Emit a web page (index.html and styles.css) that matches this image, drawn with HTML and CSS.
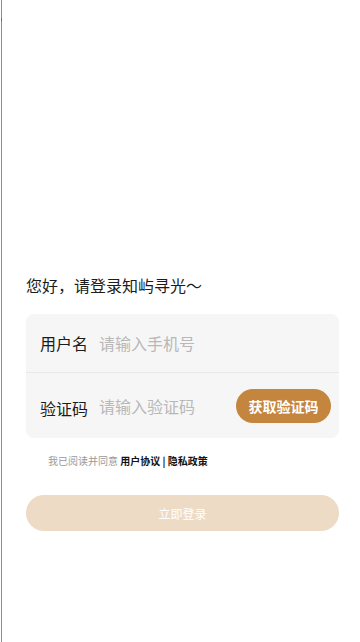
FILE: index.html
```html
<!DOCTYPE html>
<html lang="zh-CN">
<head>
  <meta charset="UTF-8">
  <title>登录</title>
  <meta name="viewport" content="width=device-width, initial-scale=1.0">
  <link rel="stylesheet" href="styles.css">
</head>
<body>
  <div class="page">
    <span class="edge-mark"></span>
    <div class="login">
      <h1 class="greet">您好，请登录知屿寻光～</h1>

      <div class="form-box">
        <div class="row">
          <span class="label">用户名</span>
          <input class="field" type="text" placeholder="请输入手机号">
        </div>
        <div class="row">
          <span class="label">验证码</span>
          <input class="field" type="text" placeholder="请输入验证码">
          <button class="code-btn">获取验证码</button>
        </div>
      </div>

      <p class="agree">我已阅读并同意 <strong>用户协议 | 隐私政策</strong></p>

      <button class="submit-btn">立即登录</button>
    </div>
  </div>
</body>
</html>
```

FILE: styles.css
```css
html, body {
  margin: 0;
  padding: 0;
  height: 100%;
  background: #ffffff;
}
body {
  font-family: "Noto Sans CJK SC", "Noto Sans", sans-serif;
  color: #222;
}
.page {
  position: relative;
  min-height: 100%;
  margin-left: 1px;
  border-left: 1px solid #8c8c8c;
  box-sizing: border-box;
}
.edge-mark {
  position: absolute;
  left: -1px;
  top: 18px;
  width: 1px;
  height: 3px;
  background: #3d6fb8;
}
.login {
  padding: 271px 21px 0 24px;
}
.greet {
  margin: 0;
  font-size: 16px;
  font-weight: normal;
  line-height: 28px;
  color: #1c1c1c;
}
.form-box {
  margin-top: 15px;
  background: #f6f6f6;
  border-radius: 8px;
  overflow: hidden;
}
.row {
  display: flex;
  align-items: center;
  padding: 0 8px 0 14px;
  height: 58px;
}
.row + .row {
  height: 65px;
  border-top: 1px solid #e9e9e9;
}
.label {
  font-size: 16px;
  color: #1c1c1c;
  width: 59px;
  flex-shrink: 0;
}
.row + .row .label {
  padding-top: 4px;
}
.field {
  flex: 1;
  min-width: 0;
  border: none;
  outline: none;
  background: transparent;
  font-family: inherit;
  font-size: 16px;
  color: #222;
  padding: 0;
}
.field::placeholder {
  color: #b8b8b8;
}
.code-btn {
  flex-shrink: 0;
  height: 34px;
  width: 95px;
  border: none;
  border-radius: 17px;
  background: #c4853f;
  color: #fff;
  font-family: inherit;
  font-size: 14px;
  font-weight: bold;
  padding: 0;
}
.agree {
  margin: 16px 0 0 22px;
  font-size: 10px;
  color: #9a9a9a;
  line-height: 14px;
}
.agree strong {
  color: #111;
}
.submit-btn {
  display: block;
  width: 100%;
  margin-top: 27px;
  height: 36px;
  border: none;
  border-radius: 18px;
  background: #eddbc6;
  color: #fff;
  font-family: inherit;
  font-size: 12px;
}
```
